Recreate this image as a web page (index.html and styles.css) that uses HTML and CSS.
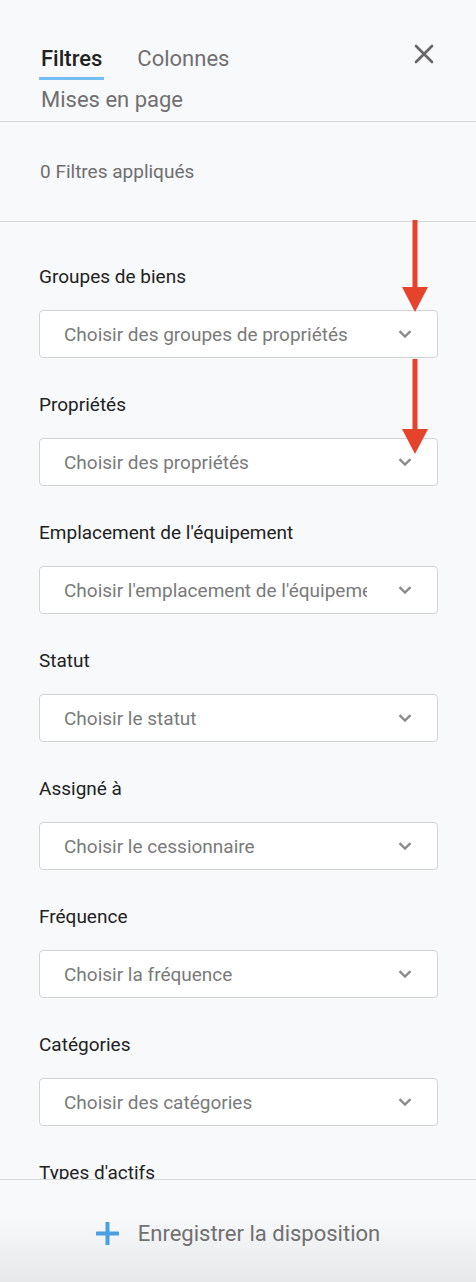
FILE: index.html
```html
<!doctype html>
<html lang="fr">
<head>
<meta charset="utf-8">
<title>Filtres</title>
<link rel="stylesheet" href="styles.css">
</head>
<body>
<div class="panel">
  <div class="panel_head">
    <div class="tabs">
      <span class="tab tab_active">Filtres</span>
      <span class="tab">Colonnes</span>
      <span class="tab">Mises en page</span>
    </div>
    <svg class="close" width="20" height="20" viewBox="0 0 20 20">
      <path d="M2 2 L18 18 M18 2 L2 18" stroke="#666" stroke-width="2.6" stroke-linecap="round"/>
    </svg>
  </div>

  <div class="applied">0 Filtres appliqués</div>

  <div class="filters">
    <div class="filter">
      <div class="filter_label">Groupes de biens</div>
      <div class="select"><span class="select_text">Choisir des groupes de propriétés</span><svg class="chevron" width="14" height="8" viewBox="0 0 14 8"><path d="M1.5 1.2 L7 6.5 L12.5 1.2" fill="none" stroke="#8a8a8a" stroke-width="2.4"/></svg></div>
    </div>
    <div class="filter">
      <div class="filter_label">Propriétés</div>
      <div class="select"><span class="select_text">Choisir des propriétés</span><svg class="chevron" width="14" height="8" viewBox="0 0 14 8"><path d="M1.5 1.2 L7 6.5 L12.5 1.2" fill="none" stroke="#8a8a8a" stroke-width="2.4"/></svg></div>
    </div>
    <div class="filter">
      <div class="filter_label">Emplacement de l'équipement</div>
      <div class="select"><span class="select_text">Choisir l'emplacement de l'équipement</span><svg class="chevron" width="14" height="8" viewBox="0 0 14 8"><path d="M1.5 1.2 L7 6.5 L12.5 1.2" fill="none" stroke="#8a8a8a" stroke-width="2.4"/></svg></div>
    </div>
    <div class="filter">
      <div class="filter_label">Statut</div>
      <div class="select"><span class="select_text">Choisir le statut</span><svg class="chevron" width="14" height="8" viewBox="0 0 14 8"><path d="M1.5 1.2 L7 6.5 L12.5 1.2" fill="none" stroke="#8a8a8a" stroke-width="2.4"/></svg></div>
    </div>
    <div class="filter">
      <div class="filter_label">Assigné à</div>
      <div class="select"><span class="select_text">Choisir le cessionnaire</span><svg class="chevron" width="14" height="8" viewBox="0 0 14 8"><path d="M1.5 1.2 L7 6.5 L12.5 1.2" fill="none" stroke="#8a8a8a" stroke-width="2.4"/></svg></div>
    </div>
    <div class="filter">
      <div class="filter_label">Fréquence</div>
      <div class="select"><span class="select_text">Choisir la fréquence</span><svg class="chevron" width="14" height="8" viewBox="0 0 14 8"><path d="M1.5 1.2 L7 6.5 L12.5 1.2" fill="none" stroke="#8a8a8a" stroke-width="2.4"/></svg></div>
    </div>
    <div class="filter">
      <div class="filter_label">Catégories</div>
      <div class="select"><span class="select_text">Choisir des catégories</span><svg class="chevron" width="14" height="8" viewBox="0 0 14 8"><path d="M1.5 1.2 L7 6.5 L12.5 1.2" fill="none" stroke="#8a8a8a" stroke-width="2.4"/></svg></div>
    </div>
    <div class="filter">
      <div class="filter_label">Types d'actifs</div>
    </div>
  </div>

  <div class="panel_foot">
    <svg class="plus" width="23" height="23" viewBox="0 0 23 23">
      <path d="M11.5 1 V22 M1 11.5 H22" stroke="#4a9fe0" stroke-width="4" stroke-linecap="round"/>
    </svg>
    <span class="save">Enregistrer la disposition</span>
  </div>
</div>

<!-- annotation arrows -->
<svg class="arrow arrow_one" width="26" height="92" viewBox="0 0 26 92">
  <rect x="10.5" y="0" width="5" height="68" fill="#e5432b"/>
  <polygon points="0,67 26,67 13,92" fill="#e5432b"/>
</svg>
<svg class="arrow arrow_two" width="26" height="95" viewBox="0 0 26 95">
  <rect x="10.5" y="0" width="5" height="71" fill="#e5432b"/>
  <polygon points="0,70 26,70 13,95" fill="#e5432b"/>
</svg>
</body>
</html>
```

FILE: styles.css
```css
html, body {
  margin: 0;
  padding: 0;
}

body {
  background: #f8f9fb;
  font-family: Roboto, "Liberation Sans", sans-serif;
  position: relative;
}

.panel {
  height: 1282px;
  display: flex;
  flex-direction: column;
}

.panel_head {
  display: flex;
  align-items: flex-start;
  justify-content: space-between;
  padding: 46px 42px 0 39px;
  border-bottom: 1px solid #d6d7d9;
}

.tabs {
  width: 240px;
  display: flex;
  flex-wrap: wrap;
  column-gap: 31px;
  row-gap: 7px;
}

.tab {
  font-size: 22px;
  line-height: 26px;
  color: #707070;
  padding: 0 2px 5px;
  border-bottom: 3px solid transparent;
}

.tab_active {
  color: #222;
  font-weight: 500;
  border-bottom-color: #74bdf5;
}

.close {
  margin-top: -2px;
}

.applied {
  height: 99px;
  display: flex;
  align-items: center;
  padding-left: 40px;
  font-size: 19px;
  color: #6e6e6e;
  border-bottom: 1px solid #d6d7d9;
}

.filters {
  flex: 1;
  overflow: hidden;
  padding: 43px 38px 0 39px;
}

.filter {
  margin-bottom: 35px;
}

.filter_label {
  font-size: 19px;
  line-height: 24px;
  color: #222;
  margin-bottom: 21px;
}

.select {
  height: 46px;
  display: flex;
  align-items: center;
  background: #fff;
  border: 1px solid #d3d4d6;
  border-radius: 4px;
  padding: 0 25px 0 24px;
}

.select_text {
  flex: 1;
  overflow: hidden;
  white-space: nowrap;
  font-size: 19px;
  color: #7a7a7a;
  margin-right: 31px;
}

.chevron {
  flex: none;
}

.panel_foot {
  height: 97px;
  flex: none;
  display: flex;
  align-items: center;
  justify-content: center;
  gap: 19px;
  padding-top: 5px;
  border-top: 1px solid #d6d7d9;
  background: linear-gradient(to bottom, #f8f9fb 35%, #e7e8e9);
}

.save {
  font-size: 22px;
  color: #707070;
}

.arrow {
  position: absolute;
  left: 402px;
}
.arrow_one {
  top: 220px;
}
.arrow_two {
  top: 359px;
}
```
